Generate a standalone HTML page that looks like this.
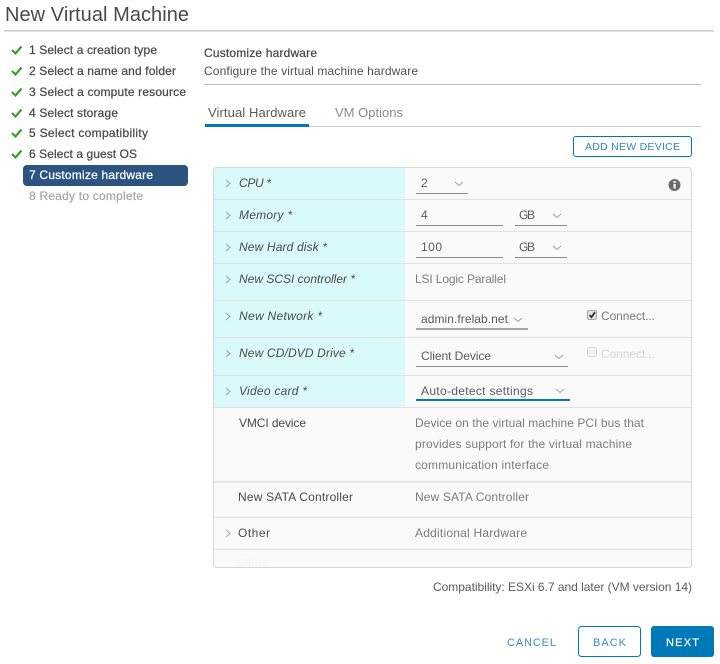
<!DOCTYPE html>
<html><head><meta charset="utf-8"><style>
html,body{margin:0;padding:0;background:#fff;width:720px;height:664px;overflow:hidden}
svg{display:block}
text{font-family:"Liberation Sans",sans-serif;font-size:12px;fill:#5c5c5c}
.s{font-size:12px;fill:#4a4a4a;stroke:#4a4a4a;stroke-width:.25}
.l{font-style:italic;fill:#4a4a4a;font-size:12px}
.v{fill:#5c5c5c}
.g{fill:#7c7c7c}
.c{fill:none;stroke:#a0a0a0;stroke-width:1}
.d{fill:none;stroke:#a0a0a0;stroke-width:1}
.ck{fill:none;stroke:#3c9f2c;stroke-width:2.2}
.b{font-size:11px;fill:#0079b8}
</style></head><body>
<svg width="720" height="664" viewBox="0 0 720 664" xmlns="http://www.w3.org/2000/svg">
<rect width="720" height="664" fill="#fff"/>
<text x="5" y="21" textLength="184" style="font-size:20px;fill:#4a4a4a">New Virtual Machine</text>
<rect x="4" y="30" width="710" height="1.5" fill="#ccc"/>

<path class="ck" d="M12 50l3.500 3.500 6-7"/><path class="ck" d="M12 71l3.500 3.500 6-7"/><path class="ck" d="M12 92l3.500 3.500 6-7"/><path class="ck" d="M12 113l3.500 3.500 6-7"/><path class="ck" d="M12 133l3.500 3.500 6-7"/><path class="ck" d="M12 154l3.500 3.500 6-7"/>
<text class="s" x="29" y="54" textLength="128">1 Select a creation type</text>
<text class="s" x="29" y="75" textLength="147">2 Select a name and folder</text>
<text class="s" x="29" y="96" textLength="157">3 Select a compute resource</text>
<text class="s" x="29" y="117" textLength="89">4 Select storage</text>
<text class="s" x="29" y="137" textLength="119">5 Select compatibility</text>
<text class="s" x="29" y="158" textLength="108">6 Select a guest OS</text>
<rect x="23" y="165" width="165" height="21" rx="4" fill="#2b5480"/>
<text x="29" y="179" textLength="124" style="fill:#fff;stroke:#fff;stroke-width:.25">7 Customize hardware</text>
<text x="29" y="200" textLength="114" style="fill:#a8a8a8;stroke:#a8a8a8;stroke-width:.25">8 Ready to complete</text>

<text class="s" x="204" y="57" textLength="113">Customize hardware</text>
<text x="204" y="75" textLength="214" style="fill:#505050">Configure the virtual machine hardware</text>
<rect x="204" y="84" width="497" height="1" fill="#bbb"/>

<text x="208" y="117" textLength="98" style="font-size:13px;fill:#5a5a5a">Virtual Hardware</text>
<text x="335" y="117" textLength="68" style="font-size:13px;fill:#8c8c8c">VM Options</text>
<rect x="205" y="126" width="496" height="1" fill="#ccc"/>
<rect x="205" y="124" width="104" height="3" fill="#0079b8"/>

<rect x="573.500" y="136.500" width="118" height="20" rx="2.500" fill="#fff" stroke="#0079b8" stroke-width="1"/>
<text class="b" x="585" y="150" textLength="95" style="font-size:10.500px;fill:#2f88bd">ADD NEW DEVICE</text>

<rect x="213.500" y="167.500" width="478" height="400" rx="3" fill="#fafafa" stroke="#d7d7d7"/>
<path d="M214 171a3 3 0 0 1 3-3H405V407H214z" fill="#d9f9fa"/>
<g fill="#e2e2e2">
<rect x="214" y="199" width="477" height="1"/>
<rect x="214" y="231" width="477" height="1"/>
<rect x="214" y="263" width="477" height="1"/>
<rect x="214" y="300" width="477" height="1"/>
<rect x="214" y="337" width="477" height="1"/>
<rect x="214" y="375" width="477" height="1"/>
<rect x="214" y="407" width="477" height="1"/>
<rect x="214" y="481" width="477" height="1.500"/>
<rect x="214" y="517" width="477" height="1"/>
<rect x="214" y="549" width="477" height="1"/>
</g>

<path class="c" d="M226 180l4 3.500-4 3.500"/>
<path class="c" d="M226 212l4 3.500-4 3.500"/>
<path class="c" d="M226 244l4 3.500-4 3.500"/>
<path class="c" d="M226 276l4 3.500-4 3.500"/>
<path class="c" d="M226 313l4 3.500-4 3.500"/>
<path class="c" d="M226 350l4 3.500-4 3.500"/>
<path class="c" d="M226 388l4 3.500-4 3.500"/>
<path class="c" d="M226 530l4 3.500-4 3.500"/>

<text class="l" x="239" y="187" textLength="32">CPU *</text>
<text class="l" x="239" y="219" textLength="53">Memory *</text>
<text class="l" x="239" y="251" textLength="88">New Hard disk *</text>
<text class="l" x="239" y="283" textLength="116">New SCSI controller *</text>
<text class="l" x="239" y="320" textLength="83">New Network *</text>
<text class="l" x="239" y="357" textLength="115">New CD/DVD Drive *</text>
<text class="l" x="239" y="395" textLength="68">Video card *</text>
<text x="239" y="427" textLength="67" style="fill:#4a4a4a">VMCI device</text>
<text x="238" y="501" textLength="115" style="fill:#4a4a4a">New SATA Controller</text>
<text x="238" y="537" textLength="32" style="fill:#4a4a4a">Other</text>
<text x="238" y="567" textLength="32" style="fill:#f5f5f5">Other</text>

<text class="v" x="421" y="187">2</text>
<path class="d" d="M455 182l4 3.500 4-3.500"/>
<rect x="416" y="193" width="52" height="1" fill="#8c8c8c"/>
<text class="v" x="421" y="219">4</text>
<rect x="416" y="225" width="87" height="1" fill="#8c8c8c"/>
<text class="v" x="519" y="219" textLength="16">GB</text>
<path class="d" d="M553 214l4 3.500 4-3.500"/>
<rect x="515" y="225" width="52" height="1" fill="#8c8c8c"/>
<text class="v" x="421" y="251" textLength="21">100</text>
<rect x="416" y="257" width="87" height="1" fill="#8c8c8c"/>
<text class="v" x="519" y="251" textLength="16">GB</text>
<path class="d" d="M553 246l4 3.500 4-3.500"/>
<rect x="515" y="257" width="52" height="1" fill="#8c8c8c"/>
<text class="g" x="415" y="283" textLength="91">LSI Logic Parallel</text>
<text class="v" x="421" y="323" textLength="87">admin.frelab.net</text>
<path class="d" d="M514 318l4 3.500 4-3.500"/>
<rect x="416" y="328" width="112" height="2" fill="#a5a5a5"/>
<text class="v" x="421" y="360" textLength="70">Client Device</text>
<path class="d" d="M555 355l4 3.500 4-3.500"/>
<rect x="416" y="366" width="152" height="1" fill="#8c8c8c"/>
<text class="v" x="421" y="395" textLength="112">Auto-detect settings</text>
<path class="d" d="M556 389l4 3.500 4-3.500"/>
<rect x="416" y="399" width="154" height="2" fill="#0079b8"/>

<rect x="587.500" y="310.500" width="9" height="9" rx="1.500" fill="#e4e4e4" stroke="#a8a8a8"/>
<path d="M589.500 315l2 2.200 3.500-5" fill="none" stroke="#333" stroke-width="1.800"/>
<text class="g" x="601" y="320" textLength="54">Connect...</text>
<rect x="587.500" y="347.500" width="9" height="9" rx="1.500" fill="#f3f3f3" stroke="#dcdcdc"/>
<text x="601" y="358" textLength="54" style="fill:#d5d5d5">Connect...</text>

<circle cx="674.500" cy="185" r="6" fill="#6c6c6c"/>
<rect x="673.500" y="184" width="2.200" height="4.500" fill="#fafafa"/>
<rect x="673.500" y="181" width="2.200" height="2" fill="#fafafa"/>

<text class="g" x="415" y="427" textLength="229">Device on the virtual machine PCI bus that</text>
<text class="g" x="415" y="448" textLength="217">provides support for the virtual machine</text>
<text class="g" x="415" y="469" textLength="134">communication interface</text>
<text class="g" x="415" y="501" textLength="114">New SATA Controller</text>
<text class="g" x="415" y="537" textLength="112">Additional Hardware</text>

<text x="433" y="591" textLength="259" style="fill:#5c5c5c">Compatibility: ESXi 6.7 and later (VM version 14)</text>

<text class="b" x="507" y="646" textLength="49" style="fill:#3a8cbf">CANCEL</text>
<rect x="578.500" y="626.500" width="62" height="30" rx="3" fill="#fff" stroke="#0079b8"/>
<text class="b" x="593" y="646" textLength="33" style="fill:#3a8cbf">BACK</text>
<rect x="651" y="626" width="63" height="31" rx="3" fill="#0079b8"/>
<text class="b" x="666" y="646" textLength="33" style="fill:#fff;stroke:#fff;stroke-width:.2">NEXT</text>
</svg>
</body></html>
